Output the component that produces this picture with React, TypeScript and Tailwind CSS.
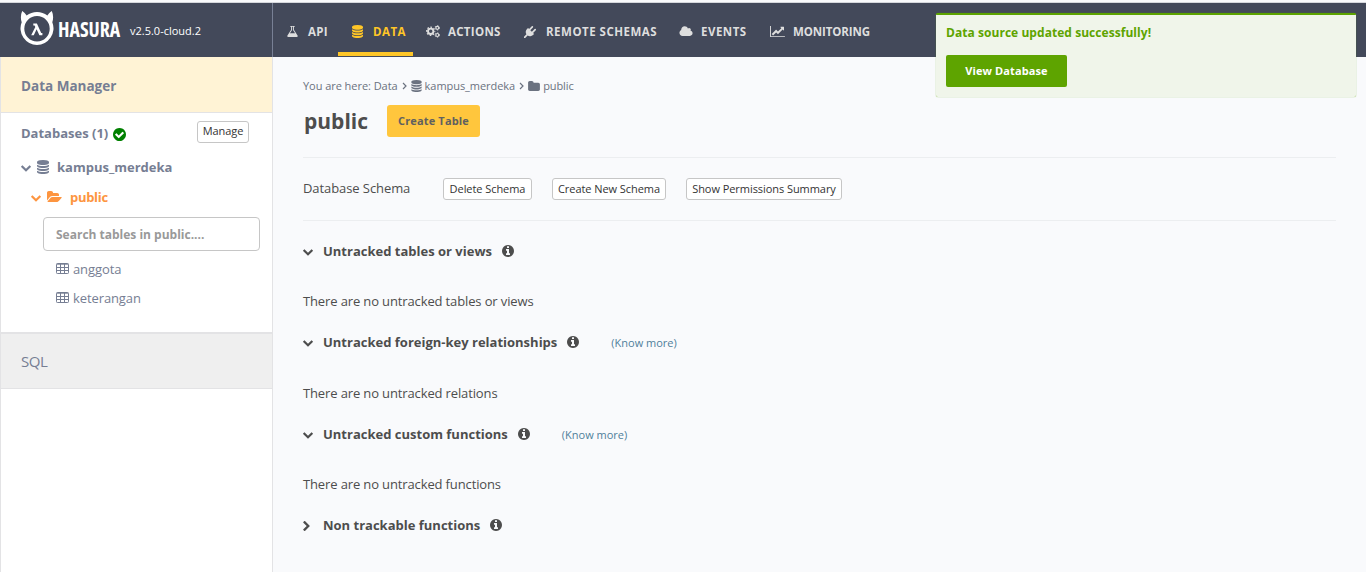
import type { ReactNode } from "react";

type IconProps = { className?: string };

function Glyph({ d, box = "0 0 1792 1792", className = "" }: IconProps & { d: string; box?: string }) {
  return (
    <svg viewBox={box} fill="currentColor" className={`shrink-0 ${className}`} aria-hidden="true">
      <path d={d} />
    </svg>
  );
}

const CIRCLE =
  "zm640 416q0 209-103 385.5t-279.5 279.5-385.5 103-385.5-103-279.5-279.5-103-385.5 103-385.5 279.5-279.5 385.5-103 385.5 103 279.5 279.5 103 385.5z";

const Database = (p: IconProps) => (
  <Glyph {...p} box="128 0 1536 1792" d="M896 768q237 0 443-43t325-127v170q0 69-103 128t-280 93.5-385 34.5-385-34.5-280-93.5-103-128v-170q119 84 325 127t443 43zm0 768q237 0 443-43t325-127v170q0 69-103 128t-280 93.5-385 34.5-385-34.5-280-93.5-103-128v-170q119 84 325 127t443 43zm0-384q237 0 443-43t325-127v170q0 69-103 128t-280 93.5-385 34.5-385-34.5-280-93.5-103-128v-170q119 84 325 127t443 43zm0-1152q208 0 385 34.5t280 93.5 103 128v128q0 69-103 128t-280 93.5-385 34.5-385-34.5-280-93.5-103-128v-128q0-69 103-128t280-93.5 385-34.5z" />
);
const Flask = (p: IconProps) => (
  <Glyph {...p} d="M1591 1448q56 89 21.5 152.5t-140.5 63.5h-1152q-106 0-140.5-63.5t21.5-152.5l503-793v-399h-64q-26 0-45-19t-19-45 19-45 45-19h512q26 0 45 19t19 45-19 45-45 19h-64v399zm-779-725l-272 429h712l-272-429-20-31v-436h-128v436z" />
);
const Plug = (p: IconProps) => (
  <Glyph {...p} d="M1755 453q37 38 37 90.5t-37 90.5l-401 400 150 150-160 160q-163 163-389.5 186.5t-411.5-100.5l-362 362h-181v-181l362-362q-124-185-100.5-411.500t186.5-389.5l160-160 150 150 400-401q38-37 91-37t90 37 37 90.5-37 90.5l-400 401 234 234 401-400q38-37 91-37t90 37z" />
);
const Cloud = (p: IconProps) => (
  <Glyph {...p} box="0 0 2048 1792" d="M1984 1152q0 159-112.5 271.5t-271.5 112.5h-1088q-185 0-316.5-131.5t-131.5-316.5q0-132 71-241.5t187-163.5q-2-28-2-43 0-212 150-362t362-150q158 0 286.500 88t187.5 230q70-62 166-62 106 0 181 75t75 181q0 75-41 138 129 30 213 134.5t84 239.5z" />
);
const LineChart = (p: IconProps) => (
  <Glyph {...p} box="0 0 2048 1792" d="M2048 1536v128h-2048v-1536h128v1408h1920zm-128-1248v435q0 21-19.5 29.5t-35.5-7.5l-121-121-633 633q-10 10-23 10t-23-10l-233-233-416 416-192-192 585-585q10-10 23-10t23 10l233 233 464-464-121-121q-16-16-7.5-35.5t29.5-19.5h435q14 0 23 9t9 23z" />
);
const Info = (p: IconProps) => (
  <Glyph {...p} box="128 128 1536 1536" d={"M1152 1376v-160q0-14-9-23t-23-9h-96v-512q0-14-9-23t-23-9h-320q-14 0-23 9t-9 23v160q0 14 9 23t23 9h96v320h-96q-14 0-23 9t-9 23v160q0 14 9 23t23 9h448q14 0 23-9t9-23zm-128-896v-160q0-14-9-23t-23-9h-192q-14 0-23 9t-9 23v160q0 14 9 23t23 9h192q14 0 23-9t9-23" + CIRCLE} />
);
const Check = (p: IconProps) => (
  <Glyph {...p} box="128 128 1536 1536" d={"M1412 734q0-28-18-46l-91-90q-19-19-45-19t-45 19l-408 407-226-226q-19-19-45-19t-45 19l-91 90q-18 18-18 46 0 27 18 45l362 362q19 19 45 19 27 0 46-19l543-543q18-18 18-45" + CIRCLE.replace("m640 416", "m252 162")} />
);
const Folder = (p: IconProps) => (
  <Glyph {...p} box="64 128 1664 1408" d="M1728 608v704q0 92-66 158t-158 66h-1216q-92 0-158-66t-66-158v-960q0-92 66-158t158-66h320q92 0 158 66t66 158v32h672q92 0 158 66t66 158z" />
);
const FolderOpen = (p: IconProps) => (
  <Glyph {...p} box="0 128 1920 1408" d="M1879 952q0 31-31 66l-336 396q-43 51-120.5 86.5t-143.5 35.5h-1088q-34 0-60.5-13t-26.5-43q0-31 31-66l336-396q43-51 120.5-86.5t143.5-35.5h1088q34 0 60.5 13t26.5 43zm-343-344v160h-832q-94 0-197 47.5t-164 119.5l-337 396-5 6q0-4-.5-12.5t-.5-12.5v-960q0-92 66-158t158-66h320q92 0 158 66t66 158v32h544q92 0 158 66t66 158z" />
);
const ChevronDown = (p: IconProps) => (
  <Glyph {...p} box="90 533 1612 1035" d="M1683 808l-742 741q-19 19-45 19t-45-19l-742-741q-19-19-19-45.5t19-45.5l166-165q19-19 45-19t45 19l531 531 531-531q19-19 45-19t45 19l166 165q19 19 19 45.5t-19 45.5z" />
);
const ChevronRight = (p: IconProps) => (
  <Glyph {...p} box="346 45 1036 1574" d="M1363 877l-742 742q-19 19-45 19t-45-19l-166-166q-19-19-19-45t19-45l531-531-531-531q-19-19-19-45t19-45l166-166q19-19 45-19t45 19l742 742q19 19 19 45t-19 45z" />
);
const Cogs = ({ className = "" }: IconProps) => (
  <svg viewBox="0 0 14 13" fill="none" stroke="currentColor" className={`shrink-0 ${className}`} aria-hidden="true">
    <circle cx="4.7" cy="6.3" r="2.700" strokeWidth="1.900" />
    <circle cx="4.7" cy="6.3" r="4.100" strokeWidth="1.200" strokeDasharray="1.610 1.610" strokeDashoffset="0.8" />
    <circle cx="11.3" cy="2.800" r="1.500" strokeWidth="1.200" />
    <circle cx="11.3" cy="2.800" r="2.300" strokeWidth="0.800" strokeDasharray="1.204 1.204" />
    <circle cx="11.3" cy="10" r="1.500" strokeWidth="1.200" />
    <circle cx="11.3" cy="10" r="2.300" strokeWidth="0.800" strokeDasharray="1.204 1.204" />
  </svg>
);
const Table = ({ className = "" }: IconProps) => (
  <svg viewBox="0 0 13 11" fill="none" stroke="currentColor" className={`shrink-0 ${className}`} aria-hidden="true">
    <rect x="0.5" y="0.5" width="12" height="10" rx="0.8" />
    <path d="M1 1.200h11M4.500 1v9.500M8.500 1v9.500M1 4.500h11M1 7.500h11" />
  </svg>
);
const Angle = () => (
  <svg viewBox="0 0 5 8" fill="none" stroke="currentColor" strokeWidth="1.2" className="mr-[4px] ml-1 h-2 w-[5px] shrink-0">
    <path d="M1 1l3 3-3 3" />
  </svg>
);

function Logo() {
  return (
    <svg viewBox="0 0 34 34" className="mb-[3px] h-[34px] w-[34px] shrink-0" fill="white">
      <path d="M2.200 0C4 1.200 5.500 2.800 6.600 4.600A16.500 16.500 0 0 1 27.400 4.600C28.500 2.800 30 1.200 31.800 0C33.300 3.500 33.600 7.500 32.300 11.200A16.500 16.500 0 1 1 1.700 11.200C0.400 7.500 0.700 3.500 2.200 0ZM17 5A12.700 12.700 0 1 0 17 30.400A12.700 12.700 0 1 0 17 5Z" fillRule="evenodd" />
      <path d="M13.300 12.600h3.600l4.300 9.400h1.200v2.200h-3l-2.800-6-2.800 6h-2.600l4.100-8.300-.7-1.300h-1.300z" />
    </svg>
  );
}

const smallButton =
  "flex h-[22px] items-center justify-center whitespace-nowrap rounded-[3px] border border-[#c6c6c6] bg-white pb-0.5 text-[11px] leading-none tracking-[-0.06px] text-[#333]";

function NavItem({ icon, children, className }: { icon: ReactNode; children: string; className: string }) {
  return (
    <a className={`flex h-[53px] shrink-0 items-center border-b-4 pt-[8px] text-[11.5px] font-bold whitespace-nowrap ${className}`}>
      {icon}
      {children}
    </a>
  );
}

function Heading({ open = true, more = false, className, children }: { open?: boolean; more?: boolean; className: string; children: string }) {
  return (
    <div className={`flex h-5 items-center ${className}`}>
      <span className="flex w-5 shrink-0">
        {open ? <ChevronDown className="mt-[3px] h-[7px] w-[10px]" /> : <ChevronRight className="mt-px h-[10px] w-[7px]" />}
      </span>
      <h4 className="text-[13px] leading-5 font-bold">{children}</h4>
      <Info className="ml-[10px] h-3 w-3" />
      {more && <a className="mt-0.5 ml-8 text-[11px] text-[#4f7f9b]">(Know more)</a>}
    </div>
  );
}

export default function App() {
  return (
    <div className="relative flex h-[572px] w-[1366px] flex-col overflow-hidden bg-[#f9fafc] font-['Open_Sans',sans-serif] text-[#4d4d4d]">
      <header className="mt-0.5 flex h-[55px] shrink-0 border-t border-[#d5d7dc] bg-[#43495a] text-[#dedede]">
        <div className="flex w-[273px] shrink-0 items-center border-r border-[#788095] pb-0.5 pl-5">
          <Logo />
          <span className="mb-[3px] ml-1 w-[62px] origin-left scale-x-[0.9] text-[22px] leading-none font-bold text-white [font-stretch:75%]">HASURA</span>
          <span className="mt-[5px] ml-[10px] text-[11px] whitespace-nowrap text-white">v2.5.0-cloud.2</span>
        </div>
        <nav className="flex pl-[3px]">
          <NavItem className="w-[62px] border-transparent pl-[10px] tracking-[0.3px]" icon={<Flask className="mr-[9px] h-[13px] w-[13px]" />}>API</NavItem>
          <NavItem className="w-[75px] border-[#ffc627] pl-[14px] tracking-[0.5px] text-[#ffc627]" icon={<Database className="mr-[10px] h-[13px] w-[11px]" />}>DATA</NavItem>
          <NavItem className="w-[97px] border-transparent pl-[13px] tracking-[0.3px]" icon={<Cogs className="mr-2 h-[13px] w-[14px]" />}>ACTIONS</NavItem>
          <NavItem className="w-[157px] border-transparent pl-[14px] tracking-[0.5px]" icon={<Plug className="mr-[10px] h-3 w-3" />}>REMOTE SCHEMAS</NavItem>
          <NavItem className="w-[91px] border-transparent pl-3 tracking-[0.5px]" icon={<Cloud className="mr-2 h-[13px] w-[14px]" />}>EVENTS</NavItem>
          <NavItem className="border-transparent pl-3 tracking-[-0.1px]" icon={<LineChart className="mr-2 h-[13px] w-[15px]" />}>MONITORING</NavItem>
        </nav>
      </header>

      <div className="flex min-h-0 grow">
        <aside className="flex w-[273px] shrink-0 flex-col border-x border-[#e3e3e5] bg-white text-[#767e93]">
          <div className="flex h-14 items-center border-b border-[#e3e3e5] bg-[#fff3d5] pt-[3px] pl-5 text-[13.5px] font-bold">Data Manager</div>
          <div className="flex h-[39px] items-center pt-[3px] pl-5 text-[13px] font-bold">
            <span>Databases (1)</span>
            <Check className="ml-[5px] h-[13px] w-[13px] text-[#008000]" />
            <button className={`mb-[5px] ml-auto mr-[23px] w-[52px] font-normal ${smallButton}`}>Manage</button>
          </div>
          <div className="flex h-[30px] items-center pl-5 text-[13px] font-bold">
            <ChevronDown className="mt-[3px] h-[7px] w-[10px]" />
            <Database className="ml-[6px] h-[14px] w-3" />
            <span className="mt-px ml-2">kampus_merdeka</span>
          </div>
          <div className="flex h-[30px] items-center pl-[30px] text-[13px] font-bold text-[#fd9540]">
            <ChevronDown className="mt-[3px] h-[7px] w-[10px]" />
            <FolderOpen className="-mt-0.5 ml-[6px] h-[11px] w-[15px]" />
            <span className="mt-px ml-2 tracking-[-0.3px]">public</span>
          </div>
          <div className="mt-[5px] ml-[42px] flex h-[34px] w-[217px] items-center rounded-[4px] border border-[#c6c6c6] pt-px pl-3 text-[12px] font-bold text-[#999]">Search tables in public....</div>
          <div className="mt-[3px] flex h-[29px] items-center pl-[55px] text-[13px] tracking-[-0.1px]">
            <Table className="mr-1 h-[11px] w-[13px]" />
            <span className="mt-0.5">anggota</span>
          </div>
          <div className="flex h-[29px] items-center pl-[55px] text-[13px] tracking-[-0.1px]">
            <Table className="mr-1 h-[11px] w-[13px]" />
            <span className="mt-0.5">keterangan</span>
          </div>
          <div className="mt-5 flex h-[57px] items-center border-t-2 border-b border-[#e3e3e5] bg-[#efefef] pl-5 text-[15px] tracking-[-0.4px]">SQL</div>
        </aside>

        <main className="flex grow flex-col pr-[30px] pl-[30px]">
          <div className="mt-5 flex h-[18px] items-center text-[11px] text-[#6b7280]">
            <span className="tracking-[-0.05px]">You are here: Data</span>
            <Angle />
            <Database className="mr-[3px] h-3 w-[11px]" />
            <span className="tracking-[-0.05px]">kampus_merdeka</span>
            <Angle />
            <Folder className="mr-[3px] h-[10px] w-3" />
            <span className="tracking-[-0.1px]">public</span>
          </div>
          <div className="mt-[10px] flex h-8 items-center">
            <h2 className="w-[84px] pl-px text-[21px] leading-none font-bold">public</h2>
            <button className="flex h-8 w-[93px] items-center justify-center rounded-[3px] bg-[#ffc63d] text-[11px] font-bold tracking-[0.15px] text-[#606060]">Create Table</button>
          </div>
          <div className="mt-5 flex h-16 items-center border-y border-[#eceef0]">
            <span className="w-[140px] text-[13px] tracking-[-0.08px]">Database Schema</span>
            <div className="flex gap-5">
              <button className={`w-[89px] ${smallButton}`}>Delete Schema</button>
              <button className={`w-[114px] ${smallButton}`}>Create New Schema</button>
              <button className={`w-[156px] ${smallButton}`}>Show Permissions Summary</button>
            </div>
          </div>
          <Heading className="mt-5">Untracked tables or views</Heading>
          <p className="mt-[30px] h-5 text-[13px] leading-5 tracking-[-0.13px]">There are no untracked tables or views</p>
          <Heading more className="mt-[21px]">Untracked foreign-key relationships</Heading>
          <p className="mt-[31px] h-5 text-[13px] leading-5 tracking-[-0.13px]">There are no untracked relations</p>
          <Heading more className="mt-[21px]">Untracked custom functions</Heading>
          <p className="mt-[30px] h-5 text-[13px] leading-5 tracking-[-0.13px]">There are no untracked functions</p>
          <Heading open={false} className="mt-[21px]">Non trackable functions</Heading>
        </main>
      </div>

      <div className="absolute top-[13px] left-[936px] h-[84px] w-[420px] rounded-[2px] border-t-2 border-[#5ca300] bg-[#f0f5ea] px-[10px] pt-2 shadow-[0_0_1px_rgba(94,164,0,0.9)]">
        <div className="text-[12px] leading-[19px] font-bold tracking-[0.05px] text-[#5ea400]">Data source updated successfully!</div>
        <button className="mt-[13px] flex h-8 w-[121px] items-center justify-center rounded-[2px] bg-[#5ea400] text-[11px] font-bold tracking-[0.1px] text-white">View Database</button>
      </div>
    </div>
  );
}
